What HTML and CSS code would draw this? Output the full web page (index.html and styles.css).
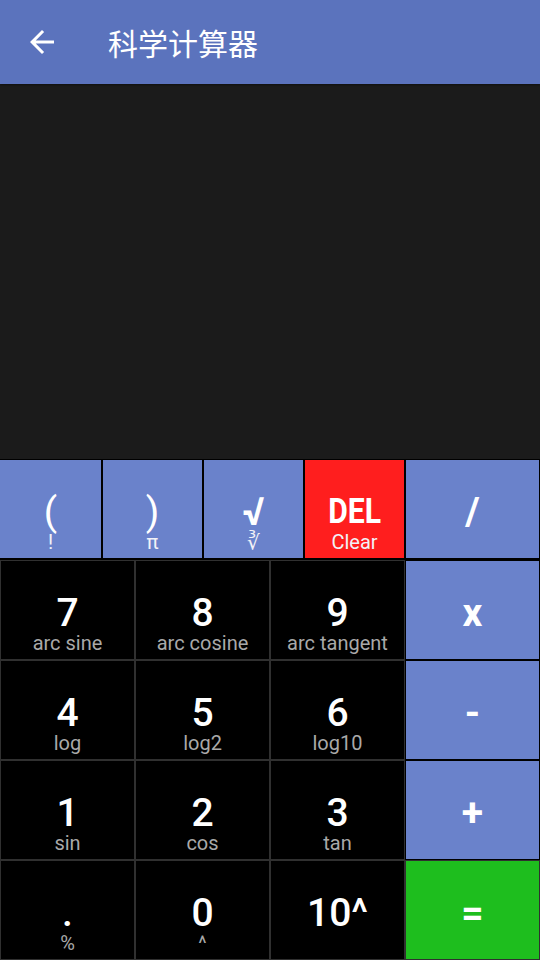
FILE: index.html
```html
<!DOCTYPE html>
<html lang="zh">
<head>
<meta charset="utf-8">
<title>科学计算器</title>
<link rel="stylesheet" href="styles.css">
</head>
<body>
<div class="app">
  <header class="toolbar">
    <svg class="back" viewBox="0 0 24 24" width="36" height="36"><path fill="#fff" d="M20 11H7.83l5.59-5.59L12 4l-8 8 8 8 1.41-1.41L7.83 13H20v-2z"/></svg>
    <h1 class="title">科学计算器</h1>
  </header>
  <div class="display"></div>
  <div class="toprow">
    <div class="key blue"><span class="main light">(</span><span class="sub white">!</span></div>
    <div class="key blue"><span class="main light">)</span><span class="sub white">π</span></div>
    <div class="key blue"><span class="main bold">√</span><span class="sub white">∛</span></div>
    <div class="key red"><span class="main del">DEL</span><span class="sub white">Clear</span></div>
    <div class="key blue"><span class="main bold">/</span></div>
  </div>
  <div class="pad">
    <div class="key num"><span class="main">7</span><span class="sub">arc sine</span></div>
    <div class="key num"><span class="main">8</span><span class="sub">arc cosine</span></div>
    <div class="key num"><span class="main">9</span><span class="sub">arc tangent</span></div>
    <div class="key op"><span class="main bold">x</span></div>
    <div class="key num"><span class="main">4</span><span class="sub">log</span></div>
    <div class="key num"><span class="main">5</span><span class="sub">log2</span></div>
    <div class="key num"><span class="main">6</span><span class="sub">log10</span></div>
    <div class="key op"><span class="main bold">-</span></div>
    <div class="key num"><span class="main">1</span><span class="sub">sin</span></div>
    <div class="key num"><span class="main">2</span><span class="sub">cos</span></div>
    <div class="key num"><span class="main">3</span><span class="sub">tan</span></div>
    <div class="key op"><span class="main bold">+</span></div>
    <div class="key num"><span class="main">.</span><span class="sub">%</span></div>
    <div class="key num"><span class="main">0</span><span class="sub">^</span></div>
    <div class="key num"><span class="main">10^</span></div>
    <div class="key eq"><span class="main bold">=</span></div>
  </div>
</div>
</body>
</html>
```
FILE: styles.css
```css
* { box-sizing: border-box; }
html, body { margin: 0; padding: 0; }
body {
  width: 540px;
  height: 960px;
  overflow: hidden;
  background: #000;
  font-family: Roboto, "Liberation Sans", "Noto Sans CJK SC", sans-serif;
  color: #fff;
}
.app {
  display: flex;
  flex-direction: column;
  height: 960px;
}
.toolbar {
  height: 84px;
  flex: none;
  background: #5b73bd;
  display: flex;
  align-items: center;
  padding-left: 24px;
  gap: 48px;
  box-shadow: 0 1px 2px rgba(0,0,0,0.4);
  position: relative;
  z-index: 1;
}
.back { display: block; flex: none; }
.title {
  margin: 0;
  font-family: "Noto Sans CJK SC", sans-serif;
  font-weight: 400;
  font-size: 30px;
  line-height: 36px;
  color: #fff;
}
.display {
  flex: 1;
  background: #1b1b1b;
}
.toprow {
  flex: none;
  height: 100px;
  display: grid;
  grid-template-columns: 101px 99px 99px 99px 1fr;
  column-gap: 2px;
  padding: 1px 1px 1px 0;
  margin-bottom: 1px;
  background: #000;
}
.pad {
  flex: none;
  height: 400px;
  display: grid;
  grid-template-columns: repeat(4, 1fr);
  grid-template-rows: repeat(4, 1fr);
  background: #000;
}
.key {
  display: flex;
  flex-direction: column;
  align-items: center;
  justify-content: center;
  padding-top: 5px;
}
.blue { background: #6a82cb; }
.red { background: #ff1e1e; }
.num {
  background: #000;
  border: 1px solid #303030;
}
.op {
  background: #6a82cb;
  margin: 1px;
}
.eq {
  background: #1ebe1e;
  border: 1px solid #303030;
}
.main {
  font-size: 39px;
  line-height: 40px;
  font-weight: 500;
  color: #fff;
}
.main.bold { font-weight: 700; }
.main.light { font-weight: 400; }
.main.del {
  font-weight: 700;
  font-size: 35px;
  display: inline-block;
  transform: scaleX(0.86);
}
.sub {
  font-size: 20px;
  line-height: 20px;
  margin-bottom: -20px;
  color: #a9a9a9;
  white-space: nowrap;
}
.sub.white { color: #f2f2f7; }
```
